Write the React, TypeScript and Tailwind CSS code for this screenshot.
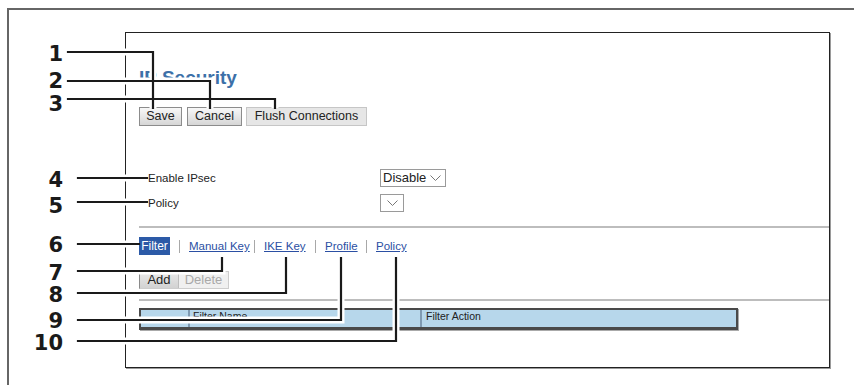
const LINES = [
  'M68 52H153V108',
  'M68 81H210V108',
  'M68 99H275V108',
  'M78 178H147',
  'M78 202H147',
  'M78 244H139',
  'M78 271H222V258',
  'M78 293H286V258',
  'M78 320H341V258',
  'M78 341H396V258',
]

const NUMBERS = [
  { n: '1', cls: 'top-[43px]' },
  { n: '2', cls: 'top-[70px]' },
  { n: '3', cls: 'top-[93px]' },
  { n: '4', cls: 'top-[169px]' },
  { n: '5', cls: 'top-[195px]' },
  { n: '6', cls: 'top-[234px]' },
  { n: '7', cls: 'top-[262px]' },
  { n: '8', cls: 'top-[284px]' },
  { n: '9', cls: 'top-[310px]' },
  { n: '10', cls: 'top-[332px]' },
]

function Chevron() {
  return (
    <svg width="11" height="6" viewBox="0 0 11 6" fill="none">
      <polyline points="0.5,0.5 5.5,5.5 10.5,0.5" stroke="#777" strokeWidth="1" />
    </svg>
  )
}

function Sep() {
  return <div className="w-px h-[13px] bg-[#a8a8a8]" />
}

export default function App() {
  const btn =
    'h-[19px] border border-[#8c8c8c] bg-linear-to-b from-[#f8f8f8] to-[#d6d6d6] text-[12.5px] leading-[17px] text-[#222] text-center'
  const link = 'text-[11.5px] leading-[18px] text-[#2b4fa3] underline whitespace-nowrap'

  return (
    <div className="relative w-[854px] h-[385px] bg-white overflow-hidden pt-[8px] pl-[7px] font-['Liberation_Sans',Arial,sans-serif]">
      {/* outer frame, clipped at right and bottom */}
      <div className="h-[377px] border-t-2 border-l-2 border-[#666] pt-[22px] pl-[116px]">
        {/* captured page */}
        <div className="w-[705px] h-[336px] border border-[#222] shadow-[1px_1px_0_#9a9a9a] pl-[13px] flex flex-col">
          <h1 className="mt-[34px] h-[22px] text-[19px] leading-[22px] font-bold text-[#3c70a8]">IP Security</h1>

          <div className="mt-[18px] flex items-center">
            <div className={`${btn} w-[43px]`}>Save</div>
            <div className={`${btn} w-[55px] ml-[5px]`}>Cancel</div>
            <div className="h-[19px] w-[121px] ml-[4px] border border-[#c6c6c6] bg-[#e6e6e6] text-[12.5px] leading-[17px] text-[#222] text-center">
              Flush Connections
            </div>
          </div>

          <div className="mt-[43px] flex items-center h-[18px]">
            <div className="w-[232px] ml-[9px] text-[11.5px] leading-[18px] text-[#222]">Enable IPsec</div>
            <div className="w-[66px] h-[18px] border border-[#9a9a9a] flex items-center pl-[2px] text-[13px] leading-[16px] text-[#222]">
              Disable
              <div className="ml-auto mr-[4px] flex">
                <Chevron />
              </div>
            </div>
          </div>
          <div className="mt-[7px] flex items-center h-[18px]">
            <div className="w-[232px] ml-[9px] text-[11.5px] leading-[18px] text-[#222]">Policy</div>
            <div className="w-[24px] h-[18px] border border-[#9a9a9a] flex items-center justify-center">
              <Chevron />
            </div>
          </div>

          <div className="mt-[14px] border-t-2 border-[#bdbdbd]" />

          <div className="mt-[9px] flex items-center h-[18px]">
            <div className="w-[31px] h-[18px] bg-[#2c5aa7] text-white text-[12px] leading-[18px] text-center">Filter</div>
            <div className="ml-[9px]"><Sep /></div>
            <span className={`${link} w-[60px] ml-[9px]`}>Manual Key</span>
            <div className="ml-[5px]"><Sep /></div>
            <span className={`${link} w-[41px] ml-[9px]`}>IKE Key</span>
            <div className="ml-[10px]"><Sep /></div>
            <span className={`${link} w-[31px] ml-[9px]`}>Profile</span>
            <div className="ml-[10px]"><Sep /></div>
            <span className={`${link} w-[31px] ml-[9px]`}>Policy</span>
          </div>

          <div className="mt-[16px] flex h-[18px] w-[90px] border border-[#cdcdcd] border-l-[#8a8a8a]">
            <div className="w-[38px] bg-linear-to-b from-[#e9e9e9] to-[#d2d2d2] text-[13px] leading-[16px] text-[#222] text-center">Add</div>
            <div className="flex-1 border-l border-[#bdbdbd] bg-[#f0f0f0] text-[13px] leading-[16px] text-[#a9a9a9] text-center">Delete</div>
          </div>

          <div className="mt-[10px] border-t-2 border-[#bdbdbd]" />

          <div className="mt-[7px] w-[599px] h-[22px] flex border-t-2 border-l-2 border-r-2 border-b-[3px] border-[#4a4a4a] bg-[#b7d7eb] shadow-[1px_1px_0_#aaa]">
            <div className="w-[47px]" />
            <div className="w-[232px] border-l-2 border-[#7f9ab2] pl-[3px] text-[10.5px] leading-[12px] text-[#222]">Filter Name</div>
            <div className="flex-1 border-l-2 border-[#7f9ab2] pl-[4px] text-[10.5px] leading-[12px] text-[#222]">Filter Action</div>
          </div>
        </div>
      </div>

      {/* callout leader lines */}
      <svg className="absolute left-0 top-0 pointer-events-none" width="854" height="385" viewBox="0 0 854 385" fill="none">
        {LINES.map((d) => (
          <path key={`h${d}`} d={d} stroke="#fff" strokeWidth="7" />
        ))}
        {LINES.map((d) => (
          <path key={d} d={d} stroke="#1a1a1a" strokeWidth="2.2" strokeLinecap="square" />
        ))}
      </svg>

      {NUMBERS.map((item) => (
        <div
          key={item.n}
          className={`absolute left-0 w-[63px] text-right text-[21px] leading-[22px] font-bold text-[#1a1a1a] font-['DejaVu_Sans',sans-serif] ${item.cls}`}
        >
          {item.n}
        </div>
      ))}
    </div>
  )
}
